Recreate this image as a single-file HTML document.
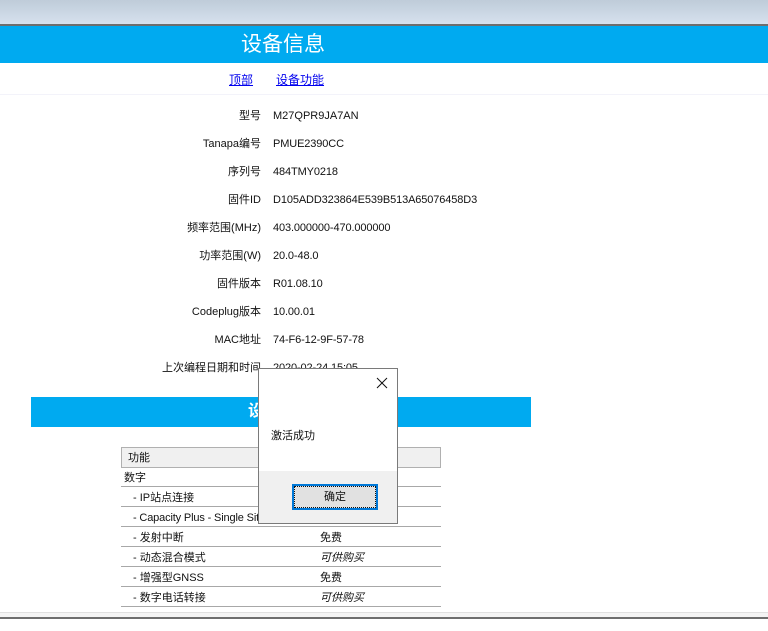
<!DOCTYPE html>
<html lang="zh"><head><meta charset="utf-8"><title>设备信息</title>
<style>
html,body{margin:0;padding:0;width:768px;height:631px;overflow:hidden;background:#fff}
body{position:relative;font:11px/14px "Liberation Sans","WenQuanYi Zen Hei","Noto Sans CJK SC",sans-serif;color:#111}
div,a,span{position:absolute;white-space:nowrap}
.top{left:0;top:0;width:768px;height:24px;background:linear-gradient(#bfccd9,#d6e1ee)}
.topl{left:0;top:24px;width:768px;height:2px;background:#6e6e6e}
.hd{left:0;top:26px;width:768px;height:37px;background:#00aaf0}
.title{left:241px;top:32px;font-size:21px;line-height:26px;color:#fff}
a{color:#00e;text-decoration:underline;font-size:12px;line-height:14px}
.sep{left:0;top:94px;width:768px;height:1px;background:#f3f3fa}
.l{right:507px}
.v{left:273px;letter-spacing:-.12px}
.band{left:31px;top:397px;width:500px;height:30px;background:#00aaf0}
.bt{left:248px;top:402px;font-size:16px;line-height:20px;color:#fff;font-weight:bold}
.th{left:121px;top:447px;width:318px;height:19px;background:#f0f0f0;border:1px solid #b0b0b0}
.ln{left:121px;width:320px;height:1px;background:#a8a8a8}
.c1{left:124px}
.c3{left:133px}
.c2{left:320px}
i{font-style:italic}
.dlg{left:258px;top:368px;width:138px;height:154px;background:#fff;border:1px solid #7a7a7a}
.foot{left:0;top:102px;width:138px;height:52px;background:#f0f0f0}
.btn{left:33px;top:13px;width:82px;height:22px;background:#e1e1e1;border:2px solid #0078d7;outline:1px dotted #111;outline-offset:-3px;text-align:center;line-height:22px}
.b1{left:0;top:612px;width:768px;height:1px;background:#e0e0e0}
.b2{left:0;top:613px;width:768px;height:4px;background:#f4f4f4}
.b3{left:0;top:617px;width:768px;height:2px;background:#6e6e6e}
</style></head><body>
<div class="top"></div><div class="topl"></div>
<div class="hd"></div><div class="title">设备信息</div>
<a href="#" style="left:229px;top:73px">顶部</a>
<a href="#" style="left:276px;top:73px">设备功能</a>
<div class="sep"></div>

<span class="l" style="top:109px">型号</span><span class="v" style="top:109px;letter-spacing:0">M27QPR9JA7AN</span>
<span class="l" style="top:137px">Tanapa编号</span><span class="v" style="top:137px">PMUE2390CC</span>
<span class="l" style="top:165px">序列号</span><span class="v" style="top:165px">484TMY0218</span>
<span class="l" style="top:193px">固件ID</span><span class="v" style="top:193px">D105ADD323864E539B513A65076458D3</span>
<span class="l" style="top:221px">频率范围(MHz)</span><span class="v" style="top:221px">403.000000-470.000000</span>
<span class="l" style="top:249px">功率范围(W)</span><span class="v" style="top:249px">20.0-48.0</span>
<span class="l" style="top:277px">固件版本</span><span class="v" style="top:277px">R01.08.10</span>
<span class="l" style="top:305px">Codeplug版本</span><span class="v" style="top:305px">10.00.01</span>
<span class="l" style="top:333px">MAC地址</span><span class="v" style="top:333px">74-F6-12-9F-57-78</span>
<span class="l" style="top:361px">上次编程日期和时间</span><span class="v" style="top:361px">2020-02-24 15:05</span>

<div class="band"></div><div class="bt">设备功能</div>
<div class="th"></div><span style="left:128px;top:451px">功能</span>
<span class="c1" style="top:471px">数字</span><div class="ln" style="top:486px"></div>
<span class="c3" style="top:491px">- IP站点连接</span><div class="ln" style="top:506px"></div>
<span class="c3" style="top:511px;letter-spacing:-.15px">- Capacity Plus - Single Site</span><div class="ln" style="top:526px"></div>
<span class="c3" style="top:531px">- 发射中断</span><span class="c2" style="top:531px">免费</span><div class="ln" style="top:546px"></div>
<span class="c3" style="top:551px">- 动态混合模式</span><span class="c2" style="top:551px"><i>可供购买</i></span><div class="ln" style="top:566px"></div>
<span class="c3" style="top:571px">- 增强型GNSS</span><span class="c2" style="top:571px">免费</span><div class="ln" style="top:586px"></div>
<span class="c3" style="top:591px">- 数字电话转接</span><span class="c2" style="top:591px"><i>可供购买</i></span><div class="ln" style="top:606px"></div>

<div class="b1"></div><div class="b2"></div><div class="b3"></div>

<div class="dlg">
<svg style="position:absolute;left:117px;top:8px" width="12" height="12" viewBox="0 0 12 12"><path d="M1 1L11 11M11 1L1 11" stroke="#111" stroke-width="1" fill="none"/></svg>
<span style="left:12px;top:60px">激活成功</span>
<div class="foot"><div class="btn">确定</div></div>
</div>
</body></html>
